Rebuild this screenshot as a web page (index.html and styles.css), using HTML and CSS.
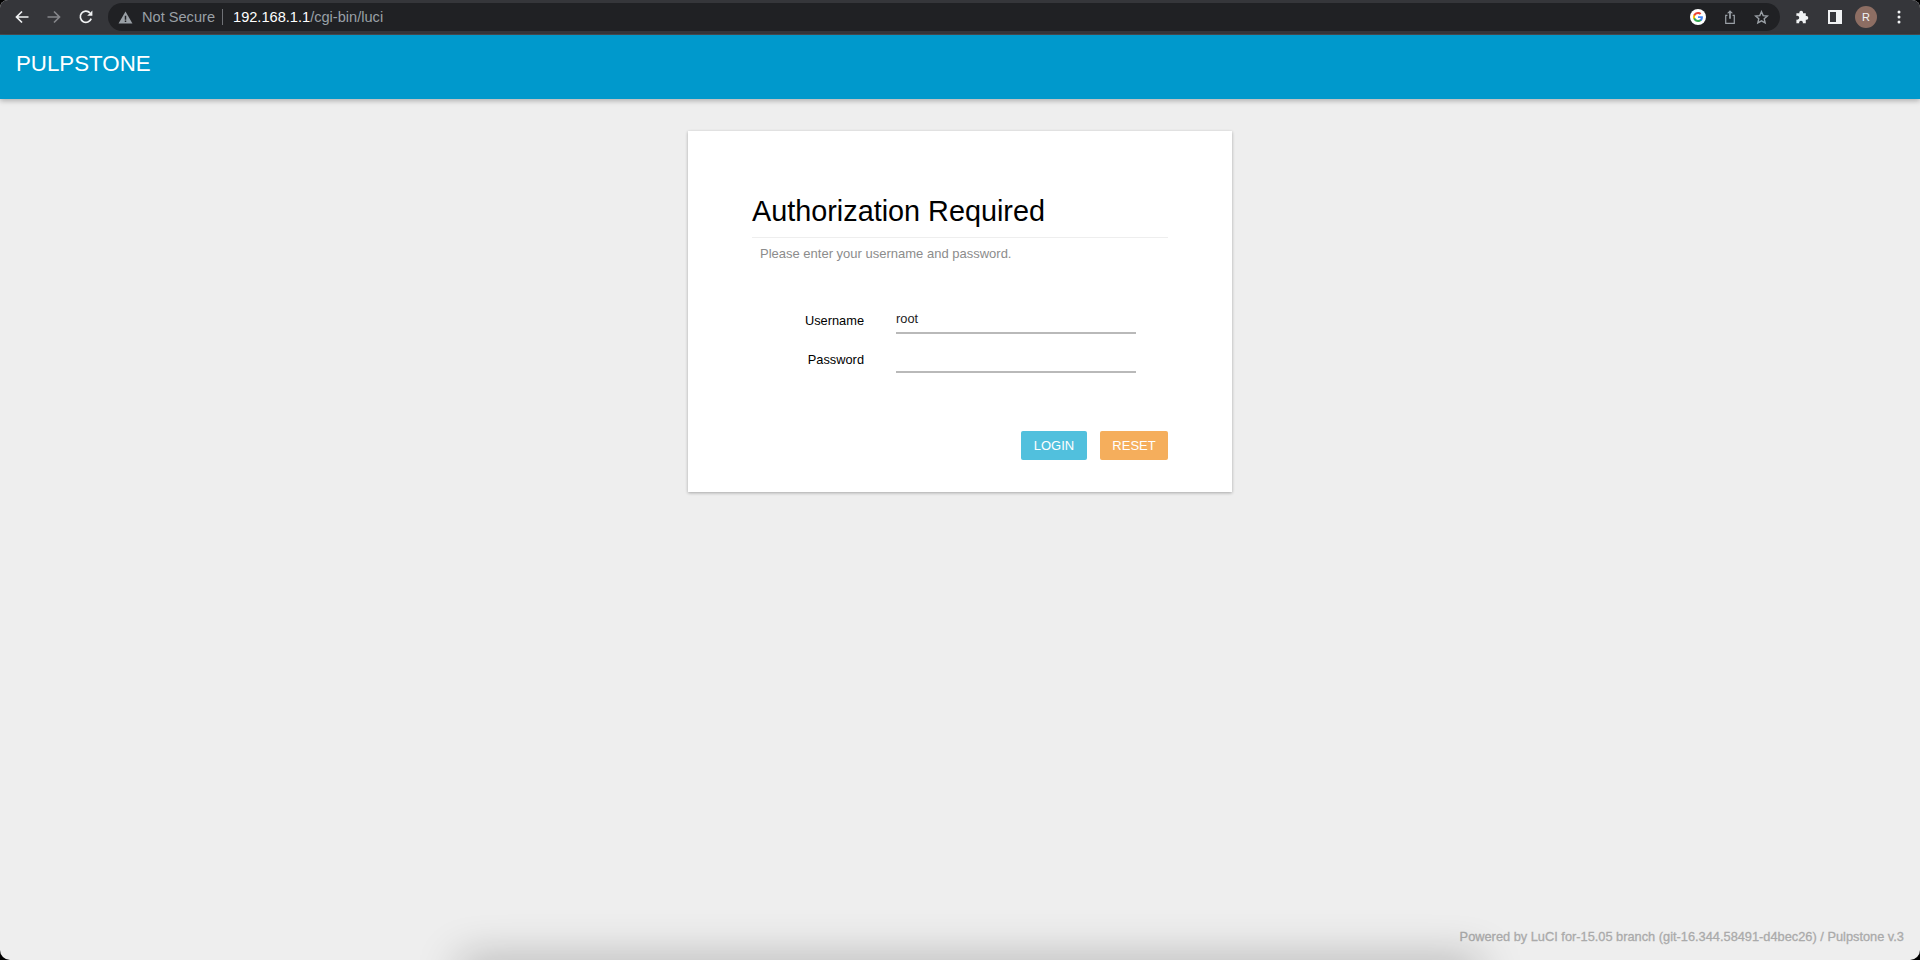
FILE: index.html
```html
<!DOCTYPE html>
<html lang="en">
<head>
<meta charset="utf-8">
<title>Authorization Required</title>
<link rel="stylesheet" href="styles.css">
</head>
<body>
<div class="window">
  <div class="toolbar">
    <div class="nav">
      <svg class="icon" viewBox="0 0 16 16"><path d="M14.5 8H2.500M8 2.500 2.500 8 8 13.500" fill="none" stroke="#f1f3f4" stroke-width="1.700"/></svg>
      <svg class="icon dim" viewBox="0 0 16 16"><path d="M1.500 8h12M8 2.500 13.500 8 8 13.500" fill="none" stroke="#85868a" stroke-width="1.700"/></svg>
      <svg class="icon" viewBox="0 0 16 16"><path d="M13.200 9.600A5.600 5.600 0 1 1 12 3.900" fill="none" stroke="#f1f3f4" stroke-width="1.700"/><path d="M14.400 1.600v5.200H9.200z" fill="#f1f3f4"/></svg>
    </div>
    <div class="omnibox">
      <svg class="warn" viewBox="0 0 16 14"><path d="M8 .5 15.500 13.500H.5z" fill="#9aa0a6"/><path d="M7.200 5h1.600v4.400H7.200zM7.200 10.200h1.600v1.600H7.200z" fill="#202124"/></svg>
      <span class="secure">Not Secure</span>
      <span class="divider"></span>
      <span class="url"><b class="host">192.168.1.1</b>/cgi-bin/luci</span>
      <span class="spacer"></span>
      <svg class="google" viewBox="0 0 16 16">
        <circle cx="8" cy="8" r="8" fill="#fff"/>
        <path d="M12.900 8.200c0-.4 0-.7-.1-1H8v1.900h2.800c-.1.6-.5 1.200-1 1.500v1.300h1.600c1-.9 1.500-2.200 1.500-3.700z" fill="#4285f4"/>
        <path d="M8 13c1.400 0 2.500-.5 3.400-1.300l-1.600-1.300c-.5.300-1 .5-1.800.5-1.300 0-2.500-.9-2.900-2.100H3.400v1.300C4.200 11.900 6 13 8 13z" fill="#34a853"/>
        <path d="M5.100 8.800c-.2-.6-.2-1.100 0-1.700V5.800H3.400a5 5 0 0 0 0 4.300z" fill="#fbbc05"/>
        <path d="M8 4.900c.8 0 1.400.3 1.900.8l1.500-1.500C10.500 3.500 9.400 3 8 3 6 3 4.200 4.100 3.400 5.800l1.700 1.300C5.500 5.800 6.700 4.900 8 4.900z" fill="#ea4335"/>
      </svg>
      <svg class="share" viewBox="0 0 14 18"><path d="M4 7H2v9.500h10V7h-2" fill="none" stroke="#9aa0a6" stroke-width="1.400"/><path d="M7 1 3.500 4.500H6V11h2V4.500h2.500z" fill="#9aa0a6"/></svg>
      <svg class="star" viewBox="0 0 16 16"><path d="M8 1.800 9.800 6l4.500.4-3.400 3 1 4.400L8 11.500l-3.900 2.300 1-4.400-3.400-3L6.200 6z" fill="none" stroke="#9aa0a6" stroke-width="1.500"/></svg>
    </div>
    <div class="actions">
      <svg class="puzzle" viewBox="0 0 16 16"><path d="M1.500 6.500V3.500h3.200a2 2 0 1 1 3.800 0h3v3a2 2 0 1 1 0 3.800v3.700H8.300a2 2 0 1 0-3.800 0H1.500V10a2 2 0 1 0 0-3.500z" fill="#f1f3f4"/></svg>
      <svg class="panel" viewBox="0 0 14 14"><path d="M0 0h14v14H0z" fill="#f1f3f4"/><path d="M2 2h6v10H2z" fill="#35363a"/></svg>
      <span class="avatar">R</span>
      <svg class="menu" viewBox="0 0 4 14"><circle cx="2" cy="2" r="1.500"/><circle cx="2" cy="7" r="1.500"/><circle cx="2" cy="12" r="1.500"/></svg>
    </div>
  </div>
  <header class="header"><span class="brand">PULPSTONE</span></header>
  <main class="main">
    <form class="card">
      <h2 class="title">Authorization Required</h2>
      <p class="hint">Please enter your username and password.</p>
      <div class="fields">
        <div class="row"><label class="label">Username</label><span class="input">root</span></div>
        <div class="row"><label class="label">Password</label><span class="input"></span></div>
      </div>
      <div class="buttons">
        <span class="btn login">LOGIN</span>
        <span class="btn reset">RESET</span>
      </div>
    </form>
  </main>
  <footer class="footer">Powered by LuCI for-15.05 branch (git-16.344.58491-d4bec26) / Pulpstone v.3</footer>
  <div class="under-shadow"></div>
</div>
</body>
</html>
```
FILE: styles.css
```css
* { box-sizing: border-box; }
html, body { margin: 0; height: 100%; background: #000; }
body { font-family: "Liberation Sans", Arial, sans-serif; overflow: hidden; }
.window {
  position: relative;
  height: 960px;
  display: flex;
  flex-direction: column;
  background: #eee;
  border-radius: 8px 8px 10px 10px;
  overflow: hidden;
}
.toolbar {
  height: 35px;
  flex: none;
  display: flex;
  align-items: center;
  background: #35363a;
  border-bottom: 1px solid #4a4b4f;
}
.nav {
  width: 108px;
  flex: none;
  display: flex;
  gap: 16px;
  padding-left: 14px;
}
.icon { width: 16px; height: 16px; display: block; }
.omnibox {
  width: 1672px;
  height: 28px;
  flex: none;
  display: flex;
  align-items: center;
  padding-left: 10px;
  background: #202124;
  border-radius: 14px;
  font-size: 14.6px;
  color: #9aa0a6;
}
.warn { width: 15px; height: 13px; margin-right: 9px; flex: none; }
.secure { white-space: nowrap; }
.divider { width: 1px; height: 16px; margin: 0 10px 0 7px; background: #6f7176; }
.url { color: #9aa0a6; white-space: nowrap; }
.host { color: #fff; font-weight: 400; }
.spacer { flex: 1; }
.google { width: 16px; height: 16px; margin-right: 18px; flex: none; }
.share { width: 12px; height: 16px; margin-right: 18px; flex: none; }
.star { width: 15px; height: 15px; margin-right: 11px; flex: none; }
.actions { display: flex; align-items: center; padding-left: 15px; }
.puzzle { width: 15px; height: 15px; margin-right: 18px; flex: none; }
.panel { width: 14px; height: 14px; margin-right: 13px; flex: none; }
.avatar {
  width: 22px;
  height: 22px;
  margin-right: 20px;
  flex: none;
  display: flex;
  align-items: center;
  justify-content: center;
  border-radius: 50%;
  background: #8d6e63;
  color: #f1f3f4;
  font-size: 11px;
}
.menu { width: 4px; height: 14px; fill: #f1f3f4; flex: none; }
.header {
  position: relative;
  height: 64px;
  flex: none;
  padding: 16px 16px 0;
  background: #09c;
  box-shadow: 0 2px 5px rgba(0, 0, 0, .26);
}
.brand { font-size: 22.3px; line-height: 26px; color: #fff; display: block; }
.main {
  flex: 1;
  display: flex;
  justify-content: center;
  padding-top: 32px;
}
.card {
  width: 544px;
  height: 361px;
  padding: 62px 64px 0;
  background: #fff;
  box-shadow: 0 1px 3px rgba(0, 0, 0, .3);
}
.title {
  margin: 0;
  height: 45px;
  padding-bottom: 8px;
  border-bottom: 1px solid #eee;
  font-size: 28.8px;
  line-height: 36px;
  font-weight: 400;
  color: #000;
}
.hint {
  margin: 8px 0 0 8px;
  font-size: 13px;
  line-height: 16px;
  color: #8c8c8c;
}
.fields {
  margin-top: 44px;
  display: flex;
  flex-direction: column;
  gap: 12px;
}
.row { display: flex; align-items: flex-start; height: 27px; }
.label {
  width: 112px;
  flex: none;
  padding-top: 7px;
  text-align: right;
  font-size: 12.8px;
  line-height: 16px;
  color: #000;
}
.input {
  width: 240px;
  height: 27px;
  margin: 1px 0 0 32px;
  padding-top: 4px;
  border-bottom: 2px solid #b9b9b9;
  font-size: 12.8px;
  line-height: 16px;
  color: #222;
}
.buttons {
  margin-top: 59px;
  display: flex;
  justify-content: flex-end;
  gap: 13px;
}
.btn {
  height: 29px;
  display: flex;
  align-items: center;
  justify-content: center;
  border-radius: 2px;
  font-size: 13px;
  color: #fff;
}
.login { width: 66px; background: #51c0dd; }
.reset { width: 68px; background: #f5ae5c; }
.footer {
  flex: none;
  height: 32px;
  padding: 1px 16px 0 0;
  text-align: right;
  font-size: 12.8px;
  line-height: 16px;
  color: #aaa;
  font-weight: 400;
  -webkit-text-stroke: .3px #aaa;
}
.under-shadow {
  position: absolute;
  left: 460px;
  right: 440px;
  bottom: -28px;
  height: 28px;
  box-shadow: 0 0 44px 0 rgba(0, 0, 0, .3);
}
```
